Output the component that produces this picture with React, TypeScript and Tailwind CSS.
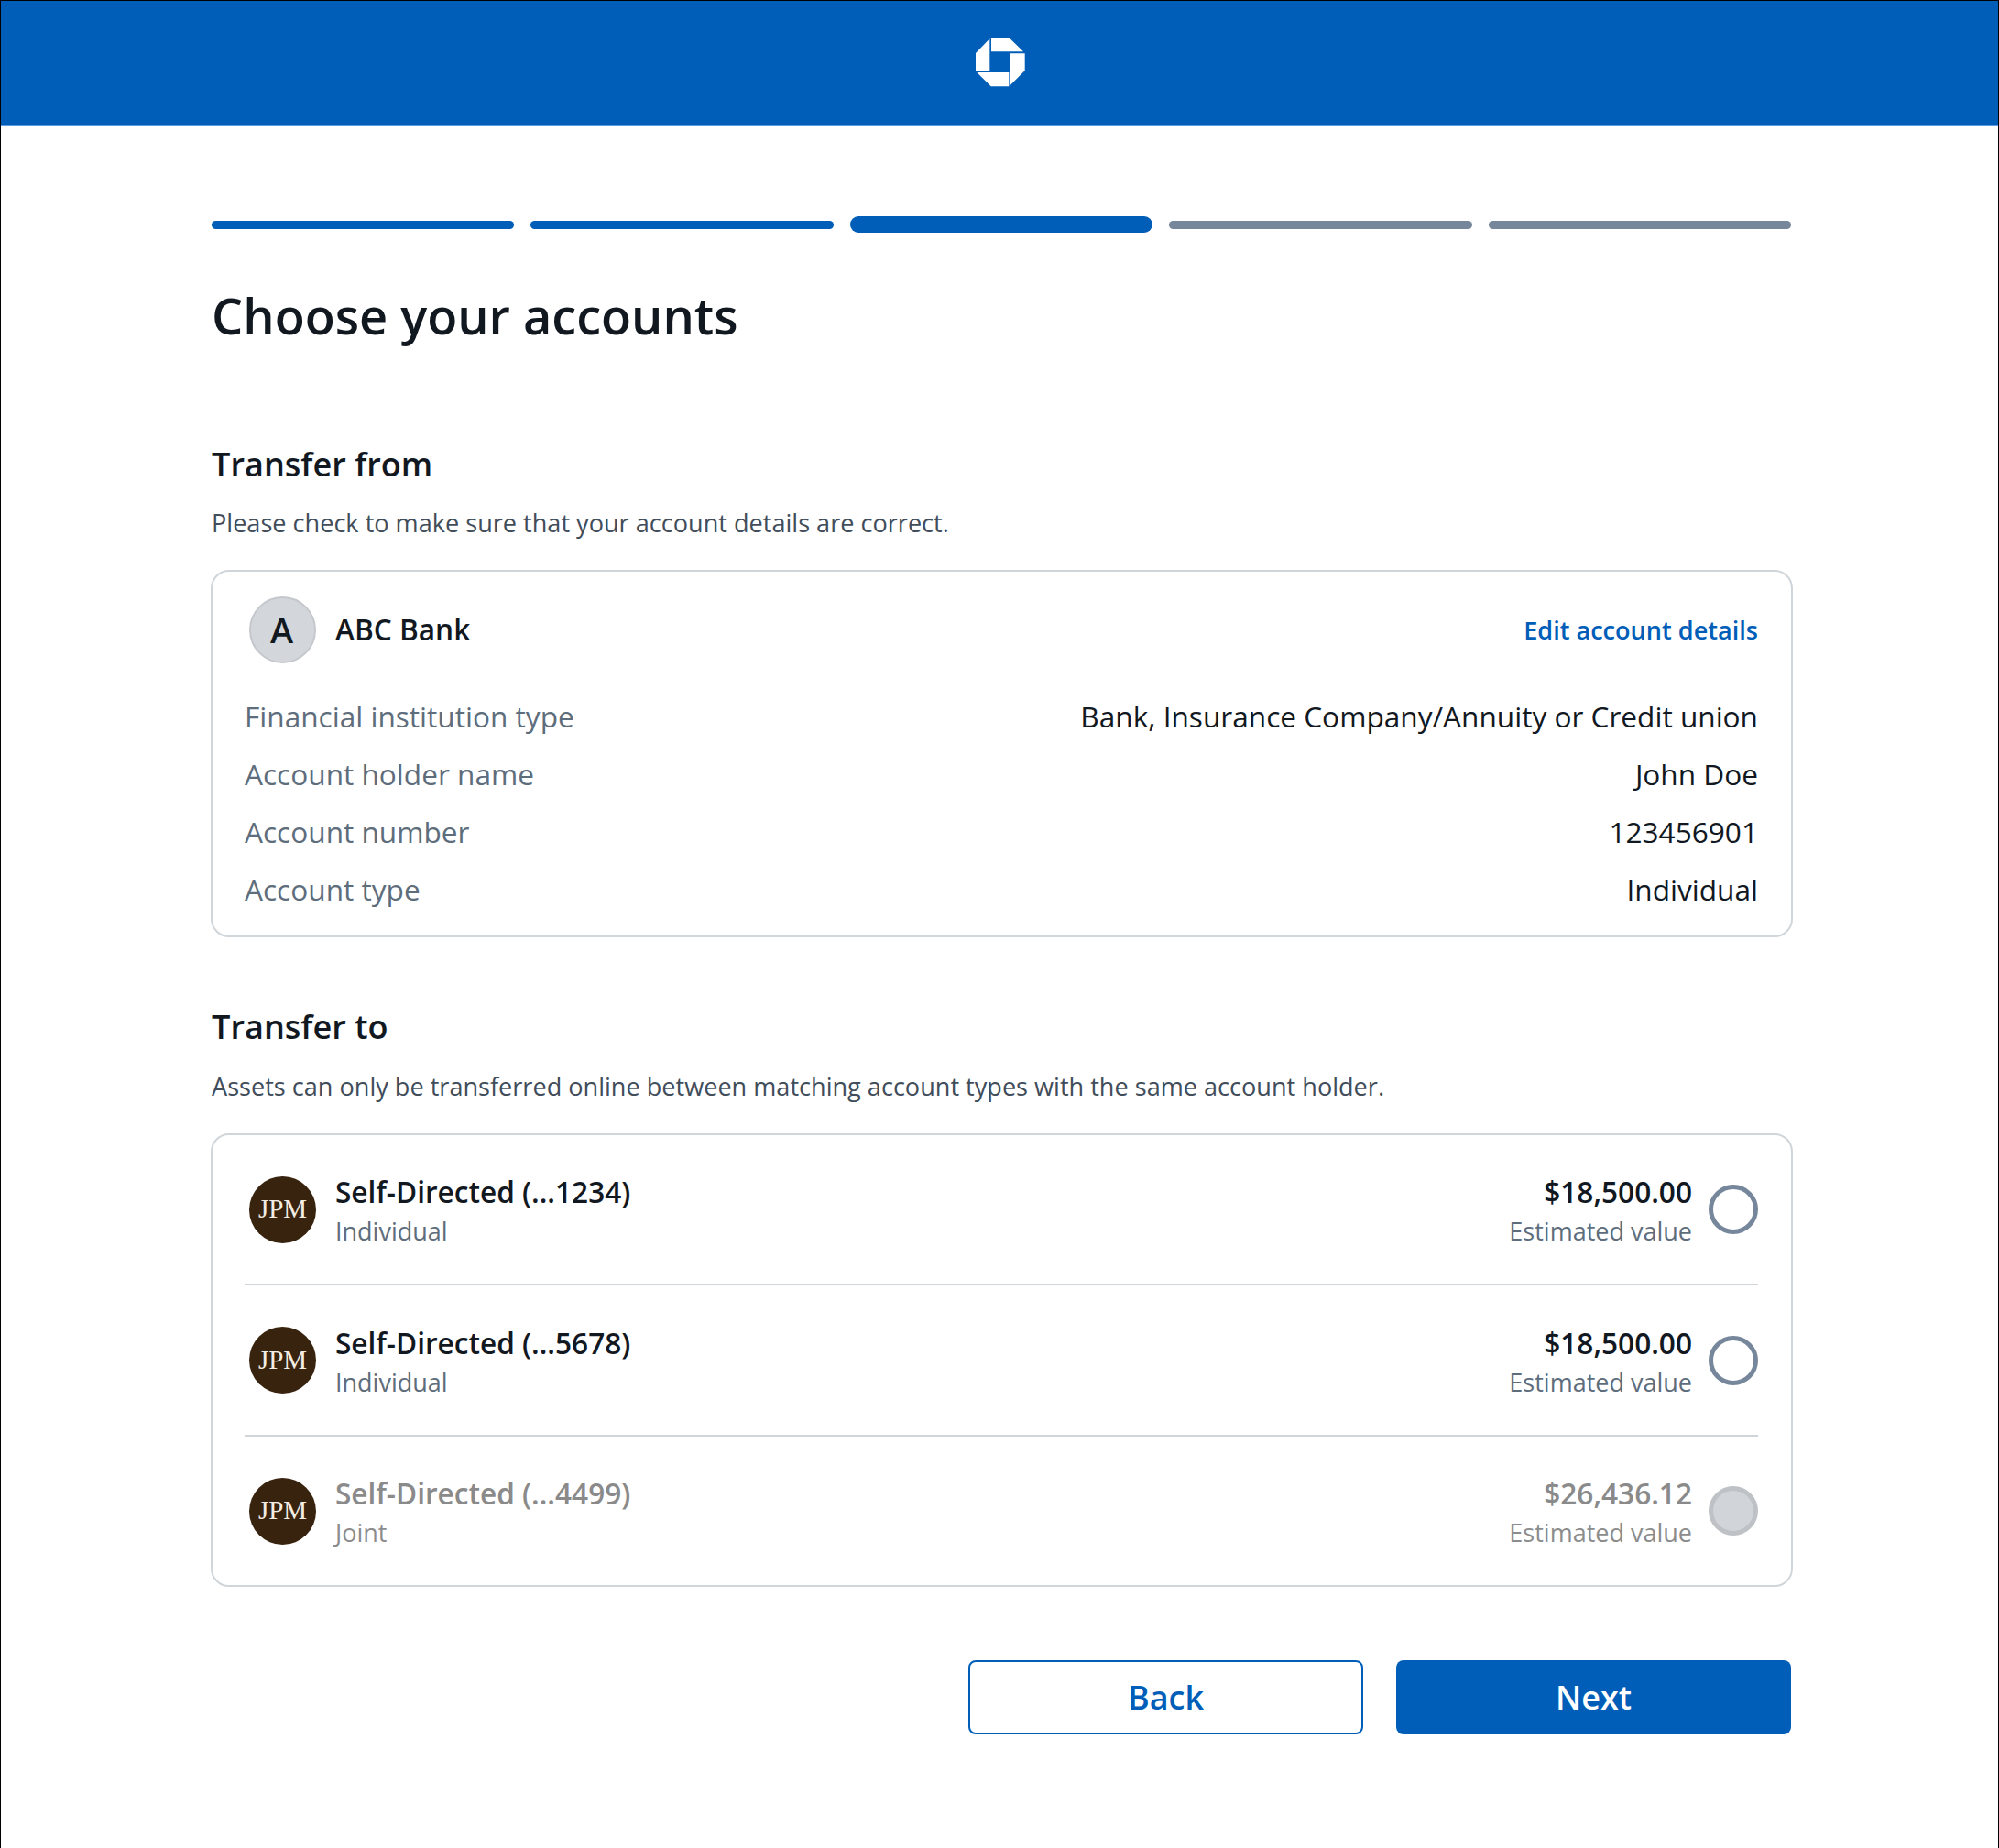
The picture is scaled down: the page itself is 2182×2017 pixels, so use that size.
function Logo() {
  return (
    <svg className="mb-[1px] ml-[2px]" width="54" height="54" viewBox="0 0 54 54" fill="#fff">
      <path d="M15.3 1.3V36.7H0V17Z" />
      <path d="M17 0H36.3L52 15.3H17Z" />
      <path d="M53.7 17.3V36L38 51.7V17.3Z" />
      <path d="M1.3 38H36.3V53.3H16.7Z" />
    </svg>
  );
}

function Detail({ label, value }: { label: string; value: string }) {
  return (
    <div className="flex h-[63px] items-center justify-between text-[31.6px]">
      <span className="text-[#5e6d7c]">{label}</span>
      <span className="text-[#12181f]">{value}</span>
    </div>
  );
}

function Account({ rowClass, name, sub, amount, disabled }: { rowClass: string; name: string; sub: string; amount: string; disabled?: boolean }) {
  const main = disabled ? "text-[#8a8a8a]" : "text-[#12181f]";
  const muted = disabled ? "text-[#8c8c8c]" : "text-[#5e6d7c]";
  return (
    <div className={`flex items-center ${rowClass}`}>
      <div className="ml-[5px] flex h-[73px] w-[73px] shrink-0 items-center justify-center rounded-full bg-[#38230e] font-['Liberation_Serif',serif] text-[29px] text-[#f3ede4]">
        JPM
      </div>
      <div className="ml-[21px] flex flex-col pt-[5px]">
        <span className={`text-[31.6px] leading-[42px] font-semibold ${main}`}>{name}</span>
        <span className={`text-[27px] leading-[43px] ${muted}`}>{sub}</span>
      </div>
      <div className="ml-auto flex flex-col items-end pt-[5px]">
        <span className={`text-[31.6px] leading-[42px] font-semibold ${main}`}>{amount}</span>
        <span className={`text-[27px] leading-[43px] ${muted}`}>Estimated value</span>
      </div>
      <div
        className={`ml-[18px] h-[54px] w-[54px] shrink-0 rounded-full border-[5px] ${
          disabled ? "border-[#bec2c6] bg-[#d1d5d9]" : "border-[#76879b] bg-white"
        }`}
      />
    </div>
  );
}

export default function App() {
  return (
    <div className="min-h-[2017px] w-[2182px] border-x border-black bg-white font-['Open_Sans',sans-serif]">
      <header className="flex h-[137px] items-center justify-center border-t border-b border-t-black border-b-[#5c9be0] bg-[#005eb8]">
        <Logo />
      </header>
      <main className="ml-[230px] w-[1724px]">
        <div className="mt-[99px] flex h-[18px] items-center gap-[18px]">
          <div className="h-[9px] flex-1 rounded-full bg-[#005eb8]" />
          <div className="h-[9px] flex-1 rounded-full bg-[#005eb8]" />
          <div className="h-[18px] flex-1 rounded-full bg-[#005eb8]" />
          <div className="h-[9px] flex-1 rounded-full bg-[#76879b]" />
          <div className="h-[9px] flex-1 rounded-full bg-[#76879b]" />
        </div>
        <h1 className="mt-[54px] text-[54.1px] leading-[72px] font-semibold text-[#12181f]">Choose your accounts</h1>
        <h2 className="mt-[102px] text-[36.1px] leading-[48px] font-semibold text-[#12181f]">Transfer from</h2>
        <p className="mt-[23px] text-[27.1px] leading-[36px] text-[#414d5a]">Please check to make sure that your account details are correct.</p>
        <section className="mt-[33px] -ml-px -mr-[2px] h-[401px] rounded-[20px] border-[2.5px] border-[#d0d5da] pl-[35px] pr-9">
          <div className="flex h-[126px] items-center justify-between">
            <div className="flex items-center">
              <div className="ml-[5px] flex h-[73px] w-[73px] items-center justify-center rounded-full border-2 border-[#c4c8cc] bg-[#d3d7db] pr-[2px] text-[38px] font-semibold text-[#12181f]">A</div>
              <span className="ml-[21px] text-[31.6px] font-semibold text-[#12181f]">ABC Bank</span>
            </div>
            <a className="mt-[3px] text-[27.1px] font-semibold text-[#005eb8]">Edit account details</a>
          </div>
          <Detail label="Financial institution type" value="Bank, Insurance Company/Annuity or Credit union" />
          <Detail label="Account holder name" value="John Doe" />
          <Detail label="Account number" value="123456901" />
          <Detail label="Account type" value="Individual" />
        </section>
        <h2 className="mt-[73px] text-[36.1px] leading-[48px] font-semibold text-[#12181f]">Transfer to</h2>
        <p className="mt-[24px] text-[27.1px] leading-[36px] text-[#414d5a]">Assets can only be transferred online between matching account types with the same account holder.</p>
        <section className="mt-[33px] -ml-px -mr-[2px] h-[495px] rounded-[20px] border-[2.5px] border-[#d0d5da] pl-[35px] pr-9">
          <Account rowClass="h-[162px]" name="Self-Directed (...1234)" sub="Individual" amount="$18,500.00" />
          <div className="h-0.5 bg-[#d0d5da]" />
          <Account rowClass="h-[163px]" name="Self-Directed (...5678)" sub="Individual" amount="$18,500.00" />
          <div className="h-0.5 bg-[#d0d5da]" />
          <Account rowClass="h-[162px]" name="Self-Directed (...4499)" sub="Joint" amount="$26,436.12" disabled />
        </section>
        <div className="mt-[80px] flex justify-end gap-9">
          <button className="h-[81px] w-[431px] rounded-lg border-2 border-[#005eb8] text-[36px] font-semibold text-[#005eb8]">Back</button>
          <button className="h-[81px] w-[431px] rounded-lg bg-[#005eb8] text-[36px] font-semibold text-white">Next</button>
        </div>
      </main>
    </div>
  );
}
